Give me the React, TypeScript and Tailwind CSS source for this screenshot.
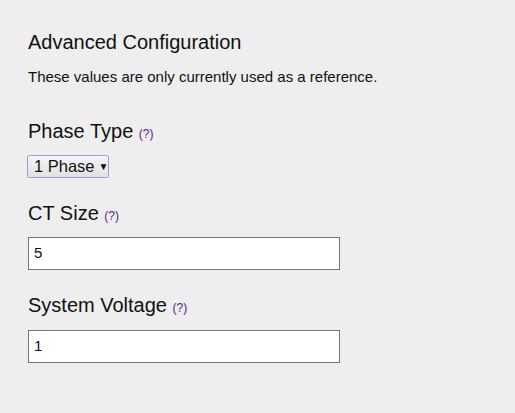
import React from "react";

function Help() {
  return <span className="text-[12px] leading-none text-[#551a8b]">(?)</span>;
}

export default function App() {
  return (
    <div className="min-h-[413px] w-full bg-[#eeeeee] pl-[28px] pt-[30px] text-[#111111] font-['Liberation_Sans',Arial,sans-serif]">
      <h2 className="text-[20px] leading-[24px]">Advanced Configuration</h2>
      <p className="mt-[14px] text-[15px] leading-[18px]">
        These values are only currently used as a reference.
      </p>

      <h3 className="mt-[34px] text-[20px] leading-[22px]">
        Phase Type <Help />
      </h3>
      <div className="mt-[13px] flex h-[23px] w-[82px] -ml-px items-center whitespace-nowrap rounded-[2px] border border-[#9a9aee] bg-gradient-to-b from-[#f4f4f4] to-[#e2e2e2] pl-[6px] text-[16.5px] leading-none">
        <span className="whitespace-nowrap">1 Phase</span>
        <span className="ml-[4px] text-[10px]">▼</span>
      </div>

      <h3 className="mt-[24px] text-[20px] leading-[22px]">
        CT Size <Help />
      </h3>
      <div className="mt-[13px] flex h-[33px] w-[312px] items-center border border-[#767676] bg-white pl-[5px] text-[15px]">
        5
      </div>

      <h3 className="mt-[24px] text-[20px] leading-[22px]">
        System Voltage <Help />
      </h3>
      <div className="mt-[14px] flex h-[33px] w-[312px] items-center border border-[#767676] bg-white pl-[5px] text-[15px]">
        1
      </div>
    </div>
  );
}
